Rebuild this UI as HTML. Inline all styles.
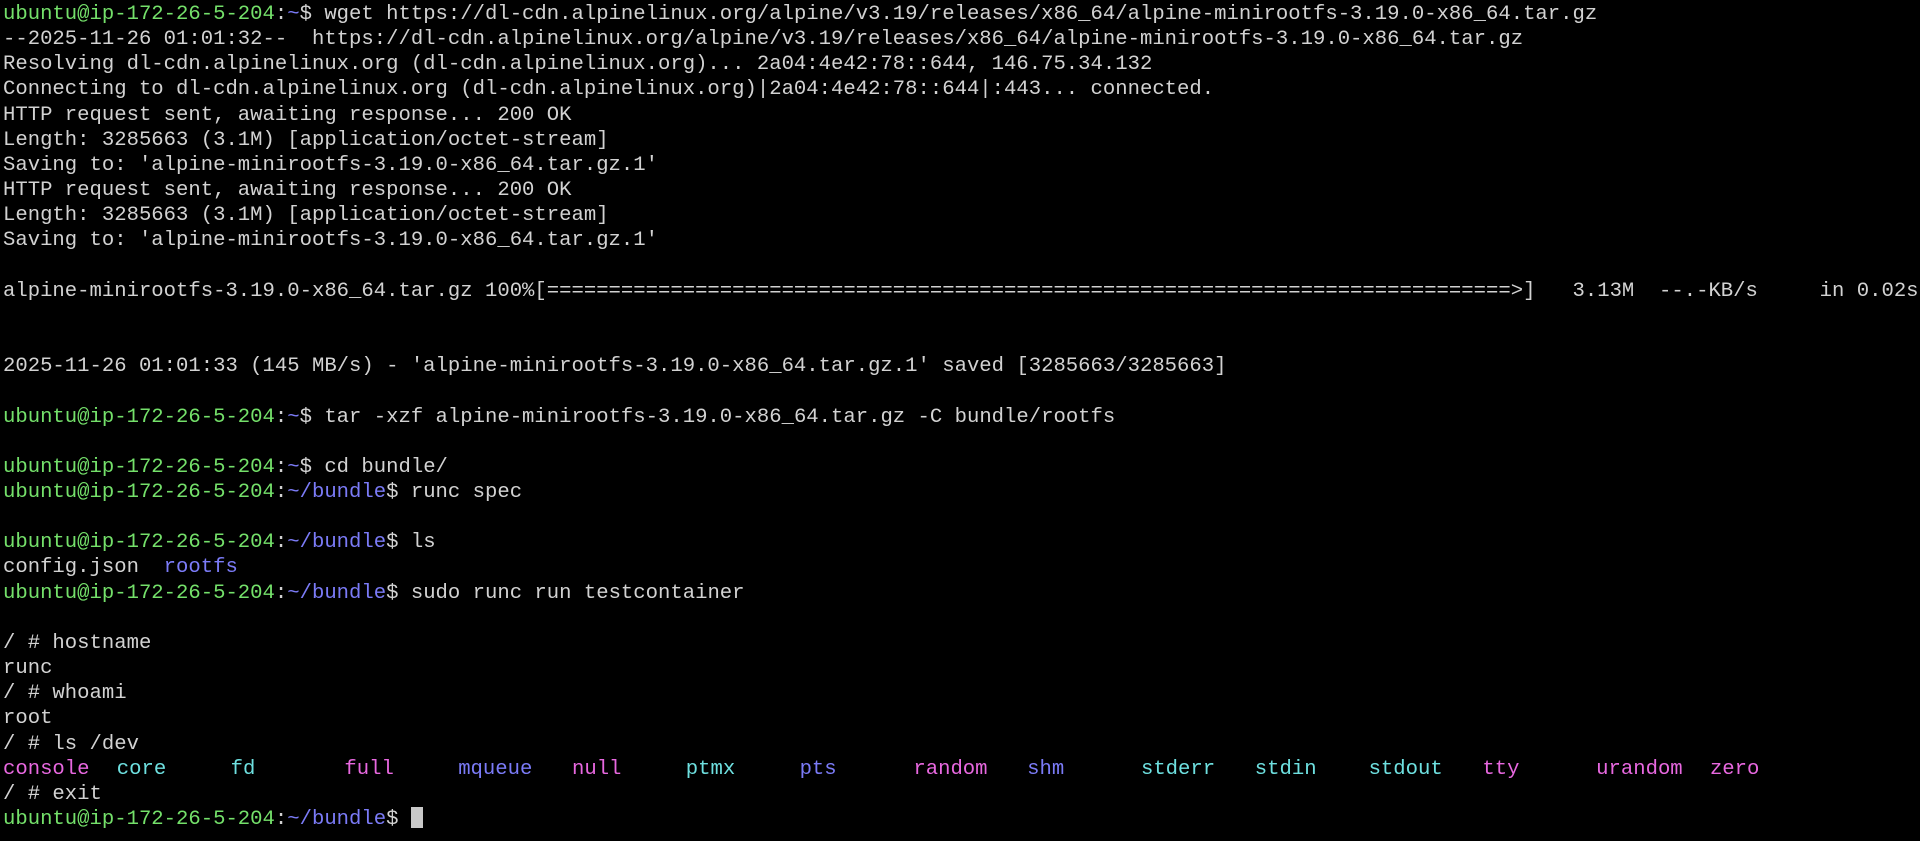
<!DOCTYPE html>
<html><head><meta charset="utf-8"><style>
html,body{margin:0;padding:0;background:#000;width:1920px;height:841px;overflow:hidden}
pre{margin:0;padding:2px 0 0 3px;font-family:"Liberation Mono","DejaVu Sans Mono",monospace;font-size:20.6px;line-height:25.15px;color:#d2d2d2;white-space:pre}
.g{color:#74e06a}.b{color:#7b7bf7}.m{color:#e868e0}.c{color:#6ee0e0}
.ls span{display:inline-block;width:113.8px}
.cur{display:inline-block;width:12px;height:21px;background:#c8c8c8;vertical-align:-4px}
</style></head><body><pre><span class="g">ubuntu@ip-172-26-5-204</span>:<span class="b">~</span>$ wget https://dl-cdn.alpinelinux.org/alpine/v3.19/releases/x86_64/alpine-minirootfs-3.19.0-x86_64.tar.gz
--2025-11-26 01:01:32--  https://dl-cdn.alpinelinux.org/alpine/v3.19/releases/x86_64/alpine-minirootfs-3.19.0-x86_64.tar.gz
Resolving dl-cdn.alpinelinux.org (dl-cdn.alpinelinux.org)... 2a04:4e42:78::644, 146.75.34.132
Connecting to dl-cdn.alpinelinux.org (dl-cdn.alpinelinux.org)|2a04:4e42:78::644|:443... connected.
HTTP request sent, awaiting response... 200 OK
Length: 3285663 (3.1M) [application/octet-stream]
Saving to: 'alpine-minirootfs-3.19.0-x86_64.tar.gz.1'
HTTP request sent, awaiting response... 200 OK
Length: 3285663 (3.1M) [application/octet-stream]
Saving to: 'alpine-minirootfs-3.19.0-x86_64.tar.gz.1'

alpine-minirootfs-3.19.0-x86_64.tar.gz 100%[==============================================================================>]   3.13M  --.-KB/s     in 0.02s


2025-11-26 01:01:33 (145 MB/s) - 'alpine-minirootfs-3.19.0-x86_64.tar.gz.1' saved [3285663/3285663]

<span class="g">ubuntu@ip-172-26-5-204</span>:<span class="b">~</span>$ tar -xzf alpine-minirootfs-3.19.0-x86_64.tar.gz -C bundle/rootfs

<span class="g">ubuntu@ip-172-26-5-204</span>:<span class="b">~</span>$ cd bundle/
<span class="g">ubuntu@ip-172-26-5-204</span>:<span class="b">~/bundle</span>$ runc spec

<span class="g">ubuntu@ip-172-26-5-204</span>:<span class="b">~/bundle</span>$ ls
config.json  <span class="b">rootfs</span>
<span class="g">ubuntu@ip-172-26-5-204</span>:<span class="b">~/bundle</span>$ sudo runc run testcontainer

/ # hostname
runc
/ # whoami
root
/ # ls /dev
<span class="ls"><span class="m">console</span><span class="c">core</span><span class="c">fd</span><span class="m">full</span><span class="b">mqueue</span><span class="m">null</span><span class="c">ptmx</span><span class="b">pts</span><span class="m">random</span><span class="b">shm</span><span class="c">stderr</span><span class="c">stdin</span><span class="c">stdout</span><span class="m">tty</span><span class="m">urandom</span><span class="m">zero</span></span>
/ # exit
<span class="g">ubuntu@ip-172-26-5-204</span>:<span class="b">~/bundle</span>$ <span class="cur"></span></pre></body></html>
